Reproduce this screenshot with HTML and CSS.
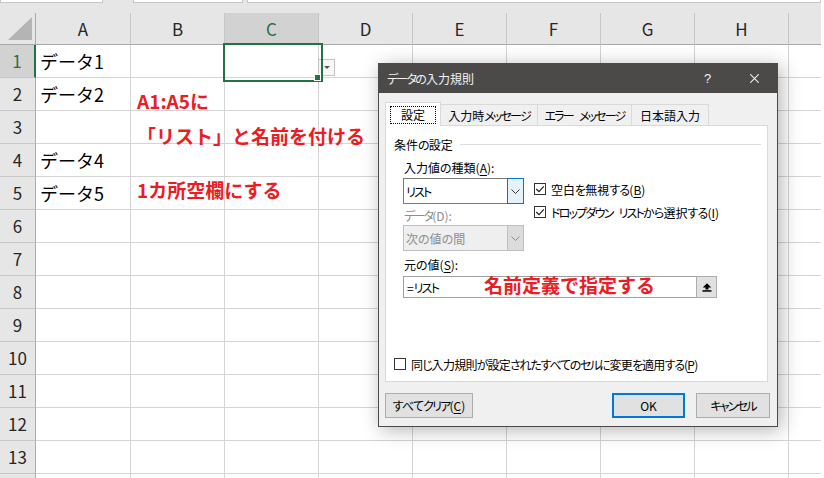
FILE: index.html
```html
<!DOCTYPE html>
<html lang="ja">
<head>
<meta charset="utf-8">
<title>データの入力規則</title>
<link rel="stylesheet" href="styles.css">
</head>
<body>
<div class="app">
  <div class="topbar">
    <div class="tb-box tb-name"></div>
    <div class="tb-box tb-mid"></div>
    <div class="tb-box tb-formula"></div>
  </div>
  <div class="sheet">
    <div class="corner"><svg width="35" height="31" viewBox="0 0 35 31"><path d="M8 27 L32 27 L32 4 Z" fill="#b4b4b4"/></svg></div>
    <div class="ch">A</div><div class="ch">B</div><div class="ch sel">C</div><div class="ch">D</div><div class="ch">E</div><div class="ch">F</div><div class="ch">G</div><div class="ch">H</div><div class="ch last"></div>

    <div class="rh sel">1</div><div class="c">データ1</div><div class="c"></div><div class="c csel"><span class="fill"></span><span class="ddbtn"><svg width="6" height="3" viewBox="0 0 6 3"><path d="M0 0 H6 L3 3 Z" fill="#555"/></svg></span></div><div class="c"></div><div class="c"></div><div class="c"></div><div class="c"></div><div class="c"></div><div class="c last"></div>
    <div class="rh">2</div><div class="c">データ2</div><div class="c"></div><div class="c"></div><div class="c"></div><div class="c"></div><div class="c"></div><div class="c"></div><div class="c"></div><div class="c last"></div>
    <div class="rh">3</div><div class="c"></div><div class="c"></div><div class="c"></div><div class="c"></div><div class="c"></div><div class="c"></div><div class="c"></div><div class="c"></div><div class="c last"></div>
    <div class="rh">4</div><div class="c">データ4</div><div class="c"></div><div class="c"></div><div class="c"></div><div class="c"></div><div class="c"></div><div class="c"></div><div class="c"></div><div class="c last"></div>
    <div class="rh">5</div><div class="c">データ5</div><div class="c"></div><div class="c"></div><div class="c"></div><div class="c"></div><div class="c"></div><div class="c"></div><div class="c"></div><div class="c last"></div>
    <div class="rh">6</div><div class="c"></div><div class="c"></div><div class="c"></div><div class="c"></div><div class="c"></div><div class="c"></div><div class="c"></div><div class="c"></div><div class="c last"></div>
    <div class="rh">7</div><div class="c"></div><div class="c"></div><div class="c"></div><div class="c"></div><div class="c"></div><div class="c"></div><div class="c"></div><div class="c"></div><div class="c last"></div>
    <div class="rh">8</div><div class="c"></div><div class="c"></div><div class="c"></div><div class="c"></div><div class="c"></div><div class="c"></div><div class="c"></div><div class="c"></div><div class="c last"></div>
    <div class="rh">9</div><div class="c"></div><div class="c"></div><div class="c"></div><div class="c"></div><div class="c"></div><div class="c"></div><div class="c"></div><div class="c"></div><div class="c last"></div>
    <div class="rh">10</div><div class="c"></div><div class="c"></div><div class="c"></div><div class="c"></div><div class="c"></div><div class="c"></div><div class="c"></div><div class="c"></div><div class="c last"></div>
    <div class="rh">11</div><div class="c"></div><div class="c"></div><div class="c"></div><div class="c"></div><div class="c"></div><div class="c"></div><div class="c"></div><div class="c"></div><div class="c last"></div>
    <div class="rh">12</div><div class="c"></div><div class="c"></div><div class="c"></div><div class="c"></div><div class="c"></div><div class="c"></div><div class="c"></div><div class="c"></div><div class="c last"></div>
    <div class="rh">13</div><div class="c"></div><div class="c"></div><div class="c"></div><div class="c"></div><div class="c"></div><div class="c"></div><div class="c"></div><div class="c"></div><div class="c last"></div>
    <div class="rh"></div><div class="c"></div><div class="c"></div><div class="c"></div><div class="c"></div><div class="c"></div><div class="c"></div><div class="c"></div><div class="c"></div><div class="c last"></div>
  </div>

  <div class="note note-a">A1:A5に</div>
  <div class="note note-b">「リスト」と名前を付ける</div>
  <div class="note note-c">1カ所空欄にする</div>

  <div class="dialog">
    <div class="titlebar">
      <span class="title"><span class="kk">データ</span><span class="kh">の</span>入力規則</span>
      <span class="help">?</span>
      <svg class="close" width="9" height="9" viewBox="0 0 9 9"><path d="M0.3 0.3 L8.7 8.7 M8.7 0.3 L0.3 8.7" stroke="#f0f0f0" stroke-width="1.1"/></svg>
    </div>
    <div class="tabs">
      <div class="tab active"><span class="focus">設定</span></div>
      <div class="tab t2">入力時<span class="kk">メッセージ</span></div>
      <div class="tab t3"><span class="kk">エラー</span><span class="sp"> </span><span class="kk">メッセージ</span></div>
      <div class="tab t4">日本語入力</div>
    </div>
    <div class="panel">
      <div class="group-title"><span>条件<span class="kh">の</span>設定</span><span class="rule"></span></div>
      <div class="group">
        <div class="label">入力値の種類(<u>A</u>):</div>
        <div class="row">
          <div class="select">
            <span class="val"><span class="kk">リスト</span></span>
            <span class="drop"><svg width="9" height="5" viewBox="0 0 9 5"><path d="M0.5 0.5 L4.5 4.5 L8.5 0.5" fill="none" stroke="#333" stroke-width="1"/></svg></span>
          </div>
          <div class="checks">
            <div class="check"><span class="box"><svg width="10" height="10" viewBox="0 0 10 10"><path d="M1.3 5 L4 7.7 L8.8 2.3" fill="none" stroke="#222" stroke-width="1.2"/></svg></span><span>空白<span class="kh">を</span>無視<span class="kh">する</span>(<u>B</u>)</span></div>
            <div class="check"><span class="box"><svg width="10" height="10" viewBox="0 0 10 10"><path d="M1.3 5 L4 7.7 L8.8 2.3" fill="none" stroke="#222" stroke-width="1.2"/></svg></span><span><span class="kk">ドロップダウン</span><span class="sp"> </span><span class="kk">リスト</span><span class="kh">から</span>選択<span class="kh">する</span>(<u>I</u>)</span></div>
          </div>
        </div>
        <div class="label dis"><span class="kk">データ</span>(D):</div>
        <div class="select disabled">
          <span class="val">次の値の間</span>
          <span class="drop"><svg width="9" height="5" viewBox="0 0 9 5"><path d="M0.5 0.5 L4.5 4.5 L8.5 0.5" fill="none" stroke="#8a8a8a" stroke-width="1"/></svg></span>
        </div>
        <div class="label src">元の値(<u>S</u>):</div>
        <div class="input">
          <span class="val">=<span class="kk">リスト</span></span>
          <span class="refbtn"><svg width="10" height="9" viewBox="0 0 10 9"><path d="M5 0.3 L9.3 4.6 H6.5 V6.6 H3.5 V4.6 H0.7 Z" fill="#000"/><rect x="0.5" y="7.2" width="9" height="1.5" fill="#000"/></svg></span>
        </div>
      </div>
      <div class="check apply"><span class="box"></span><span class="tight">同<span class="kh">じ</span>入力規則<span class="kh">が</span>設定<span class="kh">されたすべての</span><span class="kk">セル</span><span class="kh">に</span>変更<span class="kh">を</span>適用<span class="kh">する</span>(<u>P</u>)</span></div>
    </div>
    <div class="buttons">
      <button class="btn clear"><span class="kh">すべて</span><span class="kk">クリア</span>(<u>C</u>)</button>
      <button class="btn ok">OK</button>
      <button class="btn cancel"><span class="kk">キャンセル</span></button>
    </div>
  </div>

  <div class="note note-d">名前定義で指定する</div>
</div>
</body>
</html>
```

FILE: styles.css
```css
* { box-sizing: border-box; }
html, body { margin: 0; padding: 0; }
body {
  width: 824px;
  height: 478px;
  overflow: hidden;
  background: #ffffff;
  font-family: "Noto Sans CJK JP", "Noto Sans", sans-serif;
}
.app {
  position: relative;
  width: 824px;
  height: 478px;
  overflow: hidden;
}

/* top strip */
.topbar {
  height: 13px;
  width: 821px;
  background: #e6e6e6;
  display: flex;
  align-items: flex-start;
}
.tb-box {
  height: 3px;
  background: #ffffff;
  border: 1px solid #c6c6c6;
  border-top: none;
}
.tb-name { width: 103px; }
.tb-mid { width: 110px; margin-left: 30px; }
.tb-formula { flex: 1; margin-left: 4px; }

/* sheet grid */
.sheet {
  display: grid;
  width: 821px;
  grid-template-columns: 36px 95px repeat(7, 94px) 32px;
  grid-template-rows: 32px repeat(14, 33px);
}
.corner {
  background: #e6e6e6;
  border-right: 1px solid #a9a9a9;
  border-bottom: 1px solid #a9a9a9;
}
.corner svg { display: block; }
.ch {
  background: #e6e6e6;
  border-right: 1px solid #c6c6c6;
  border-bottom: 1px solid #a9a9a9;
  text-align: center;
  font-size: 17px;
  line-height: 31px;
  color: #262626;
}
.ch.sel { background: #d2d2d2; color: #217346; }
.ch.last { border-right: none; }
.rh {
  background: #e6e6e6;
  border-right: 1px solid #a9a9a9;
  border-bottom: 1px solid #c6c6c6;
  text-align: center;
  font-size: 17px;
  line-height: 32px;
  color: #262626;
}
.rh.sel {
  background: #d2d2d2;
  color: #217346;
  border-right: 2px solid #217346;
}
.c {
  border-right: 1px solid #d4d4d4;
  border-bottom: 1px solid #d4d4d4;
  font-size: 18px;
  line-height: 32px;
  padding-left: 4px;
  white-space: nowrap;
  color: #000;
}
.c.last { border-right: none; }
.csel { position: relative; }
.csel::after {
  content: "";
  position: absolute;
  left: -2px;
  top: -2px;
  width: 96px;
  height: 35px;
  border: 2px solid #217346;
}
.fill {
  position: absolute;
  left: 90px;
  top: 30px;
  width: 5px;
  height: 5px;
  background: #217346;
  box-shadow: 0 0 0 1px #ffffff;
  z-index: 2;
}
.ddbtn {
  position: absolute;
  left: 93px;
  top: 14px;
  width: 17px;
  height: 17px;
  border: 1px solid #c3c3c3;
  background: #f7f7f7;
  display: flex;
  align-items: center;
  justify-content: center;
}
.ddbtn svg { display: block; }

/* red annotations */
.note {
  position: absolute;
  color: #ec1c24;
  font-family: "Noto Sans CJK JP", sans-serif;
  font-weight: 700;
  font-size: 19px;
  line-height: 19px;
  white-space: nowrap;
  z-index: 5;
}
.note-a { left: 137px; top: 91px; }
.note-b { left: 137px; top: 126px; }
.note-c { left: 137px; top: 180px; }
.note-d { left: 484px; top: 275px; }

/* dialog */
.dialog {
  position: absolute;
  left: 378px;
  top: 63px;
  width: 400px;
  height: 364px;
  background: #f0f0f0;
  border: 1px solid #4b4a48;
  box-shadow: 3px 3px 18px rgba(0, 0, 0, 0.3);
  font-family: "Noto Sans CJK JP", sans-serif;
  font-size: 12px;
  font-feature-settings: "palt" 1;
  color: #000;
  display: flex;
  flex-direction: column;
  z-index: 4;
}
.kk { letter-spacing: -1.8px; }
.kh { letter-spacing: -0.8px; }
.sp { display: inline-block; width: 6px; }
.tight { letter-spacing: -0.7px; }
.tight .kh { letter-spacing: -1.2px; }
.tight .kk { letter-spacing: -1.8px; }
.titlebar {
  flex: none;
  height: 29px;
  background: #4b4a48;
  color: #f2f2f2;
  display: flex;
  align-items: center;
  padding-left: 8px;
}
.title { font-size: 12px; white-space: nowrap; }
.help {
  margin-left: auto;
  width: 7px;
  margin-right: 39px;
  font-size: 13px;
  font-family: "Liberation Sans", sans-serif;
}
.close { display: block; margin-right: 18px; }

.tabs {
  flex: none;
  position: relative;
  z-index: 1;
  display: flex;
  align-items: flex-end;
  height: 23px;
  margin-top: 9px;
  padding-left: 6px;
}
.tab {
  height: 21px;
  border: 1px solid #d9d9d9;
  border-bottom: none;
  background: #f0f0f0;
  margin-left: -1px;
  display: flex;
  align-items: center;
  justify-content: center;
  white-space: nowrap;
}
.tab.active {
  width: 56px;
  height: 24px;
  margin-left: 0;
  margin-bottom: -1px;
  background: #ffffff;
}
.t2 { width: 98px; }
.t3 { width: 95px; }
.t4 { width: 78px; }
.focus {
  width: 46px;
  height: 18px;
  border: 1px dotted #000;
  display: flex;
  align-items: center;
  justify-content: center;
}

.panel {
  flex: none;
  margin-left: 6px;
  width: 383px;
  height: 257px;
  border: 1px solid #d9d9d9;
  background: #ffffff;
  padding-left: 8px;
}
.group-title {
  display: flex;
  align-items: center;
  height: 16px;
  margin-top: 10px;
  white-space: nowrap;
}
.rule {
  flex: 1;
  height: 1px;
  background: #dcdcdc;
  margin: 0 6px 0 7px;
}
.group { padding-left: 9px; }
.label {
  height: 16px;
  line-height: 16px;
  margin-top: 8px;
  padding-left: 1px;
  white-space: nowrap;
}
.label.dis {
  margin-top: 5px;
  height: 14px;
  line-height: 14px;
  color: #8d8d8d;
}
.label.src {
  margin-top: 7px;
  height: 14px;
  line-height: 14px;
}
u {
  text-decoration-thickness: 1px;
  text-underline-offset: 2px;
}
.row {
  display: flex;
  align-items: flex-start;
  height: 26px;
  margin-top: 2px;
}
.select {
  flex: none;
  width: 121px;
  height: 26px;
  border: 1px solid #7a7a7a;
  background: #ffffff;
  display: flex;
  align-items: center;
}
.val { flex: 1; padding-left: 2px; white-space: nowrap; }
.drop {
  width: 17px;
  align-self: stretch;
  margin: -1px -1px -1px 0;
  border: 1px solid #0078d7;
  background: #e5f1fb;
  display: flex;
  align-items: center;
  justify-content: center;
}
.drop svg, .refbtn svg, .box svg { display: block; }
.select.disabled {
  margin-top: 2px;
  border-color: #bfbfbf;
  background: #efefef;
  color: #8d8d8d;
}
.select.disabled .drop {
  border: 1px solid #bfbfbf;
  background: #dcdcdc;
}
.checks {
  flex: none;
  margin-left: 10px;
  padding-top: 4px;
  display: flex;
  flex-direction: column;
  gap: 9px;
}
.check {
  display: flex;
  align-items: center;
  height: 14px;
  gap: 5px;
  white-space: nowrap;
}
.box {
  flex: none;
  width: 12px;
  height: 12px;
  border: 1px solid #333333;
  background: #ffffff;
}
.check.apply { margin-top: 59px; }
.input {
  margin-top: 4px;
  width: 314px;
  height: 22px;
  border: 1px solid #a0a0a0;
  background: #ffffff;
  display: flex;
  align-items: center;
}
.input .val { padding-left: 3px; }
.refbtn {
  width: 21px;
  align-self: stretch;
  margin: -1px -1px -1px 0;
  background: #e1e1e1;
  border: 1px solid #adadad;
  display: flex;
  align-items: center;
  justify-content: center;
}

.buttons {
  flex: none;
  display: flex;
  margin-top: 11px;
  padding: 0 7px 0 6px;
}
.btn {
  height: 25px;
  padding: 0;
  background: #e1e1e1;
  border: 1px solid #adadad;
  font-family: "Noto Sans CJK JP", sans-serif;
  font-size: 12px;
  font-feature-settings: "palt" 1;
  color: #000;
  display: flex;
  align-items: center;
  justify-content: center;
  white-space: nowrap;
}
.btn.clear { width: 88px; }
.btn.ok {
  width: 73px;
  margin-left: auto;
  border: 2px solid #0078d7;
}
.btn.cancel { width: 74px; margin-left: 11px; }
```
